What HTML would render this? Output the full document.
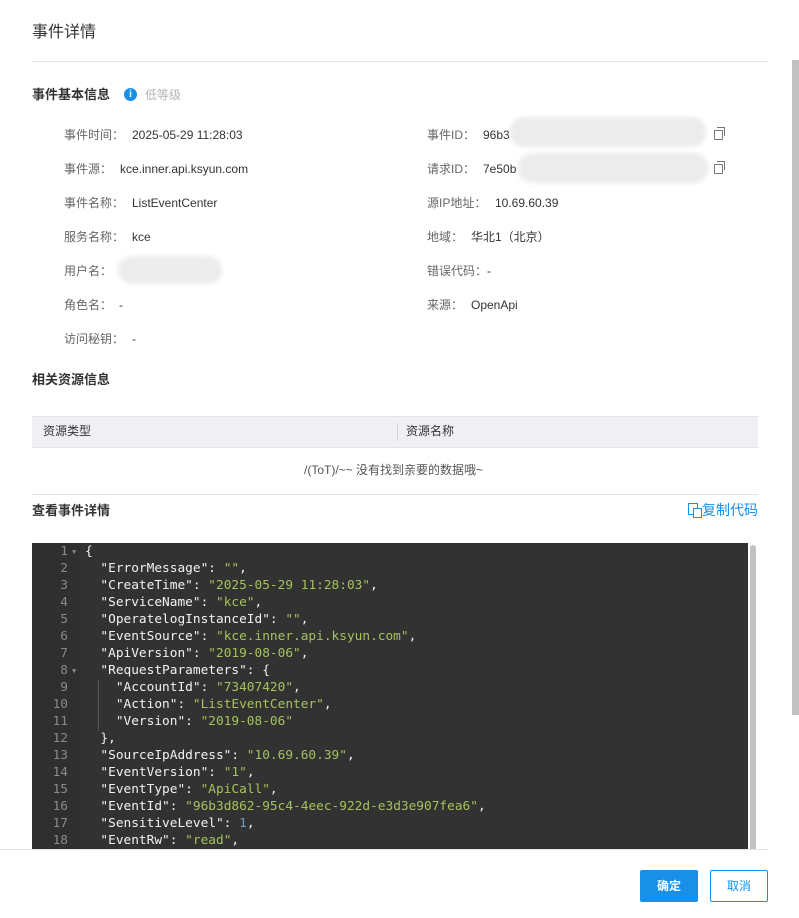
<!DOCTYPE html><html><head><meta charset="utf-8"><style>
body{margin:0;width:799px;height:918px;background:#fff;font-family:"Liberation Sans","Noto Sans CJK SC",sans-serif;position:relative;overflow:hidden;color:#333}
.a{position:absolute;white-space:nowrap;line-height:16px}
.lab{color:#666;font-size:12px}
.val{color:#333;font-size:12px}
.blur{position:absolute;background:#ececec;border-radius:14px;filter:blur(2px)}
.code{position:absolute;left:32px;top:543px;width:716px;height:306px;background:#323232;overflow:hidden;font-family:"DejaVu Sans Mono","Liberation Mono",monospace;font-size:12.8px}
.gut{position:absolute;left:0;top:0;width:48px;height:306px;background:#2f2f2f}
.ln{position:absolute;left:0;width:36px;text-align:right;color:#8a8a8a;line-height:16px}
.cl{position:absolute;left:53px;color:#f2f2f2;white-space:pre;line-height:16px}
.s{color:#a5c25c}.n{color:#6d9cbe}
.fd{position:absolute;left:40px;color:#888;font-size:7px;line-height:16px}
</style></head><body>
<div class="a" style="left:32px;top:23px;font-size:16px;color:#333;line-height:20px">事件详情</div>
<div class="a" style="left:32px;top:61px;width:736px;height:1px;background:#e5e5e5"></div>
<div class="a" style="left:792px;top:60px;width:7px;height:655px;background:#c1c1c1"></div>
<div class="a" style="left:32px;top:87px;font-size:13px;font-weight:bold;color:#333">事件基本信息</div>
<div class="a" style="left:124px;top:88px;width:13px;height:13px;border-radius:50%;background:#1890e8;color:#fff;font-size:10px;font-weight:bold;text-align:center;line-height:13px">i</div>
<div class="a" style="left:145px;top:87px;font-size:12px;color:#b5b5b5">低等级</div>

<div class="a lab" style="left:64px;top:127px">事件时间：</div><div class="a val" style="left:132px;top:127px">2025-05-29 11:28:03</div>
<div class="a lab" style="left:64px;top:161px">事件源：</div><div class="a val" style="left:120px;top:161px">kce.inner.api.ksyun.com</div>
<div class="a lab" style="left:64px;top:195px">事件名称：</div><div class="a val" style="left:132px;top:195px">ListEventCenter</div>
<div class="a lab" style="left:64px;top:229px">服务名称：</div><div class="a val" style="left:132px;top:229px">kce</div>
<div class="a lab" style="left:64px;top:263px">用户名：</div><div class="blur" style="left:118px;top:256px;width:104px;height:28px"></div>
<div class="a lab" style="left:64px;top:297px">角色名：</div><div class="a val" style="left:119px;top:297px">-</div>
<div class="a lab" style="left:64px;top:331px">访问秘钥：</div><div class="a val" style="left:132px;top:331px">-</div>

<div class="a lab" style="left:427px;top:127px">事件ID：</div><div class="a val" style="left:483px;top:127px">96b3</div><div class="blur" style="left:510px;top:117px;width:196px;height:30px"></div>
<div class="a lab" style="left:427px;top:161px">请求ID：</div><div class="a val" style="left:483px;top:161px">7e50b</div><div class="blur" style="left:518px;top:153px;width:190px;height:30px"></div>
<div class="a" style="left:714px;top:130px;width:7px;height:8px;border:1px solid #777;border-radius:1px;line-height:0"></div><div class="a" style="left:717px;top:127px;width:7px;height:8px;border-top:1px solid #777;border-right:1px solid #777;line-height:0"></div>
<div class="a" style="left:714px;top:164px;width:7px;height:8px;border:1px solid #777;border-radius:1px;line-height:0"></div><div class="a" style="left:717px;top:161px;width:7px;height:8px;border-top:1px solid #777;border-right:1px solid #777;line-height:0"></div>
<div class="a lab" style="left:427px;top:195px">源IP地址：</div><div class="a val" style="left:495px;top:195px">10.69.60.39</div>
<div class="a lab" style="left:427px;top:229px">地域：</div><div class="a val" style="left:471px;top:229px">华北1（北京）</div>
<div class="a lab" style="left:427px;top:263px">错误代码：</div><div class="a val" style="left:487px;top:263px">-</div>
<div class="a lab" style="left:427px;top:297px">来源：</div><div class="a val" style="left:471px;top:297px">OpenApi</div>

<div class="a" style="left:32px;top:372px;font-size:13px;font-weight:bold">相关资源信息</div>
<div class="a" style="left:32px;top:416px;width:726px;height:30px;background:#f0f0f4;border-top:1px solid #e3e3e8;border-bottom:1px solid #e3e3e8"></div>
<div class="a" style="left:43px;top:423px;font-size:12px;color:#333">资源类型</div>
<div class="a" style="left:397px;top:423px;width:1px;height:18px;background:#d5d5d5"></div>
<div class="a" style="left:406px;top:423px;font-size:12px;color:#333">资源名称</div>
<div class="a" style="left:304px;top:462px;font-size:12px;color:#555">/(ToT)/~~ 没有找到亲要的数据哦~</div>
<div class="a" style="left:32px;top:494px;width:726px;height:1px;background:#e5e5e5"></div>
<div class="a" style="left:32px;top:503px;font-size:13px;font-weight:bold">查看事件详情</div>
<div class="a" style="left:688px;top:503px;width:8px;height:10px;border:1px solid #1890e8"></div>
<div class="a" style="left:693px;top:508px;width:7px;height:8px;border:1px solid #1890e8;background:#fff"></div>
<div class="a" style="left:702px;top:502px;font-size:14px;color:#1890e8">复制代码</div>

<div class="code"><div class="gut"></div>
<div class="fd" style="top:1px">▼</div><div class="fd" style="top:120px">▼</div>
<div class="ln" style="top:1px">1</div><div class="cl" style="top:1px">{</div>
<div class="ln" style="top:18px">2</div><div class="cl" style="top:18px">  "ErrorMessage": <span class="s">""</span>,</div>
<div class="ln" style="top:35px">3</div><div class="cl" style="top:35px">  "CreateTime": <span class="s">"2025-05-29 11:28:03"</span>,</div>
<div class="ln" style="top:52px">4</div><div class="cl" style="top:52px">  "ServiceName": <span class="s">"kce"</span>,</div>
<div class="ln" style="top:69px">5</div><div class="cl" style="top:69px">  "OperatelogInstanceId": <span class="s">""</span>,</div>
<div class="ln" style="top:86px">6</div><div class="cl" style="top:86px">  "EventSource": <span class="s">"kce.inner.api.ksyun.com"</span>,</div>
<div class="ln" style="top:103px">7</div><div class="cl" style="top:103px">  "ApiVersion": <span class="s">"2019-08-06"</span>,</div>
<div class="ln" style="top:120px">8</div><div class="cl" style="top:120px">  "RequestParameters": {</div>
<div class="ln" style="top:137px">9</div><div class="cl" style="top:137px">    "AccountId": <span class="s">"73407420"</span>,</div>
<div class="ln" style="top:154px">10</div><div class="cl" style="top:154px">    "Action": <span class="s">"ListEventCenter"</span>,</div>
<div class="ln" style="top:171px">11</div><div class="cl" style="top:171px">    "Version": <span class="s">"2019-08-06"</span></div>
<div class="ln" style="top:188px">12</div><div class="cl" style="top:188px">  },</div>
<div class="ln" style="top:205px">13</div><div class="cl" style="top:205px">  "SourceIpAddress": <span class="s">"10.69.60.39"</span>,</div>
<div class="ln" style="top:222px">14</div><div class="cl" style="top:222px">  "EventVersion": <span class="s">"1"</span>,</div>
<div class="ln" style="top:239px">15</div><div class="cl" style="top:239px">  "EventType": <span class="s">"ApiCall"</span>,</div>
<div class="ln" style="top:256px">16</div><div class="cl" style="top:256px">  "EventId": <span class="s">"96b3d862-95c4-4eec-922d-e3d3e907fea6"</span>,</div>
<div class="ln" style="top:273px">17</div><div class="cl" style="top:273px">  "SensitiveLevel": <span class="n">1</span>,</div>
<div class="ln" style="top:290px">18</div><div class="cl" style="top:290px">  "EventRw": <span class="s">"read"</span>,</div>
<div style="position:absolute;left:66px;top:137px;width:1px;height:51px;background:#555"></div>
</div>
<div class="a" style="left:750px;top:545px;width:6px;height:304px;background:#c1c1c1;border-radius:3px 3px 0 0"></div>
<div class="a" style="left:0;top:849px;width:768px;height:1px;background:#e5e5e5"></div>
<div class="a" style="left:640px;top:870px;width:58px;height:32px;background:#1890e8;border-radius:2px;color:#fff;font-size:12px;font-weight:bold;text-align:center;line-height:32px">确定</div>
<div class="a" style="left:710px;top:870px;width:56px;height:30px;border:1px solid #1890e8;border-radius:2px;color:#1890e8;font-size:12px;text-align:center;line-height:30px">取消</div>
</body></html>
